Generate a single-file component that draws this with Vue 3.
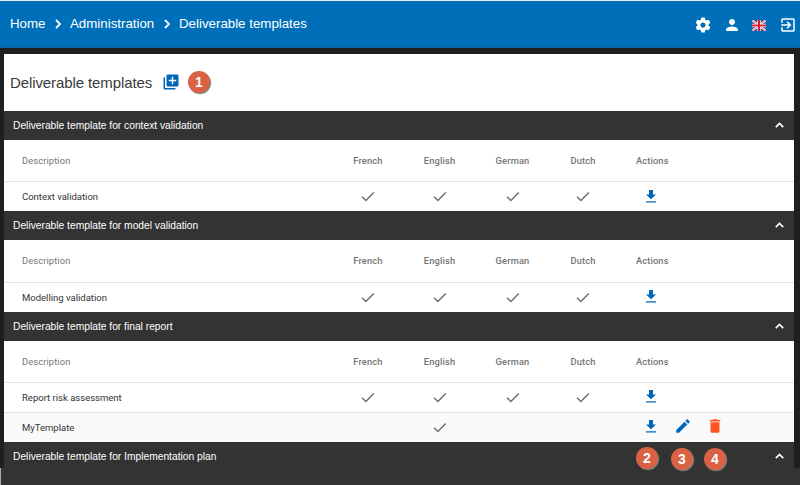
<script setup>
const crumbs = ['Home', 'Administration', 'Deliverable templates']
const languages = ['French', 'English', 'German', 'Dutch']
const sections = [
  { title: 'Deliverable template for context validation', rows: [{ name: 'Context validation', langs: languages }] },
  { title: 'Deliverable template for model validation', rows: [{ name: 'Modelling validation', langs: languages }] },
  {
    title: 'Deliverable template for final report',
    rows: [
      { name: 'Report risk assessment', langs: languages },
      { name: 'MyTemplate', langs: ['English'], editable: true },
    ],
  },
]
const callouts = [2, 3, 4]
</script>

<template>
  <div class="page">
    <header class="topbar">
      <nav class="crumbs">
        <template v-for="(c, i) in crumbs" :key="c">
          <svg v-if="i" class="sep" viewBox="0 0 6 10"><path d="M1 1l4 4-4 4" /></svg>
          <span :class="'crumb crumb-' + i">{{ c }}</span>
        </template>
      </nav>
      <div class="tools">
        <svg class="gear" viewBox="0 0 24 24"><path d="M19.43 12.98c.04-.32.07-.64.07-.98s-.03-.66-.07-.98l2.11-1.65c.19-.15.24-.42.12-.64l-2-3.46c-.12-.22-.39-.3-.61-.22l-2.49 1c-.52-.4-1.08-.73-1.69-.98l-.38-2.65C14.46 2.18 14.25 2 14 2h-4c-.25 0-.46.18-.49.42l-.38 2.65c-.61.25-1.17.59-1.69.98l-2.49-1c-.23-.09-.49 0-.61.22l-2 3.46c-.13.22-.07.49.12.64l2.11 1.65c-.04.32-.07.65-.07.98s.03.66.07.98l-2.11 1.65c-.19.15-.24.42-.12.64l2 3.46c.12.22.39.3.61.22l2.49-1c.52.4 1.08.73 1.69.98l.38 2.65c.03.24.24.42.49.42h4c.25 0 .46-.18.49-.42l.38-2.65c.61-.25 1.17-.59 1.69-.98l2.49 1c.23.09.49 0 .61-.22l2-3.46c.12-.22.07-.49-.12-.64l-2.11-1.65zM12 15.5c-1.93 0-3.5-1.57-3.5-3.5s1.57-3.5 3.5-3.5 3.5 1.57 3.5 3.5-1.57 3.5-3.5 3.5z" /></svg>
        <svg class="person" viewBox="0 0 24 24"><path d="M12 12c2.21 0 4-1.79 4-4s-1.79-4-4-4-4 1.79-4 4 1.79 4 4 4zm0 2c-2.67 0-8 1.34-8 4v2h16v-2c0-2.66-5.33-4-8-4z" /></svg>
        <svg class="flag" viewBox="0 0 14 11">
          <path fill="#2b3f86" d="M0 0h14v11H0z" />
          <path stroke="#fff" stroke-width="2.2" d="M0 0l14 11M14 0L0 11" />
          <path stroke="#d93a50" stroke-width=".8" d="M0 0l14 11M14 0L0 11" />
          <path stroke="#fff" stroke-width="3.4" d="M7 0v11M0 5.5h14" />
          <path stroke="#d8203c" stroke-width="2" d="M7 0v11M0 5.5h14" />
        </svg>
        <svg class="exit" viewBox="0 0 24 24"><path d="M10.09 15.59L11.5 17l5-5-5-5-1.41 1.41L12.67 11H3v2h9.67l-2.58 2.59zM19 3H5c-1.11 0-2 .9-2 2v4h2V5h14v14H5v-4H3v4c0 1.1.89 2 2 2h14c1.1 0 2-.9 2-2V5c0-1.1-.9-2-2-2z" /></svg>
      </div>
    </header>

    <main class="panel">
      <div class="title">
        <h1>Deliverable templates</h1>
        <svg class="add" viewBox="0 0 24 24"><path d="M4 6H2v14c0 1.1.9 2 2 2h14v-2H4V6zm16-4H8c-1.1 0-2 .9-2 2v12c0 1.1.9 2 2 2h12c1.1 0 2-.9 2-2V4c0-1.1-.9-2-2-2zm-1 9h-4v4h-2v-4H9V9h4V5h2v4h4v2z" /></svg>
        <span class="badge">1</span>
      </div>

      <section v-for="s in sections" :key="s.title">
        <div class="bar">
          <span>{{ s.title }}</span>
          <svg class="up" viewBox="0 0 9 6"><path d="M.8 5.1L4.5 1.4l3.7 3.7" /></svg>
        </div>
        <div class="row head">
          <span class="desc">Description</span>
          <span v-for="l in languages" :key="l" class="lang">{{ l }}</span>
          <span class="act-label">Actions</span>
        </div>
        <div v-for="r in s.rows" :key="r.name" class="row" :class="{ alt: r.editable }">
          <span class="desc">{{ r.name }}</span>
          <span v-for="l in languages" :key="l" class="cell">
            <svg v-if="r.langs.includes(l)" class="check" viewBox="0 0 14 11"><path d="M1 5.8L4.9 9.5 12.8 1.5" /></svg>
          </span>
          <span class="actions">
            <svg viewBox="0 0 18 18"><path d="M14 7.4h-3V3H7v4.4H4l5 4.8zM4 14.2v1.2h10v-1.2z" /></svg>
            <template v-if="r.editable">
              <svg viewBox="0 0 24 24"><path d="M3 17.25V21h3.75L17.81 9.94l-3.75-3.75L3 17.25zM20.71 7.04c.39-.39.39-1.02 0-1.41l-2.34-2.34c-.39-.39-1.02-.39-1.41 0l-1.83 1.83 3.75 3.75 1.83-1.83z" /></svg>
              <svg class="trash" viewBox="0 0 24 24"><path d="M6 19c0 1.1.9 2 2 2h8c1.1 0 2-.9 2-2V7H6v12zM19 4h-3.5l-1-1h-5l-1 1H5v2h14V4z" /></svg>
            </template>
          </span>
        </div>
      </section>
      <div class="bar last">
        <span>Deliverable template for Implementation plan</span>
        <svg class="up" viewBox="0 0 9 6"><path d="M.8 5.1L4.5 1.4l3.7 3.7" /></svg>
      </div>
    </main>
    <footer class="foot"></footer>
    <div class="callouts">
      <span v-for="n in callouts" :key="n" class="badge" :class="'b' + n">{{ n }}</span>
    </div>
  </div>
</template>

<style>
body { margin: 0; overflow: hidden; }
</style>
<style scoped>
.page {
  position: relative;
  width: 800px;
  height: 485px;
  overflow: hidden;
  background: #1f1f1f;
  font-family: "Liberation Sans", Arial, sans-serif;
  box-sizing: border-box;
}
svg { display: block; flex: none; fill: none; }
.topbar {
  display: flex;
  justify-content: space-between;
  height: 46px;
  border-top: 1px solid #e8eff3;
  border-bottom: 1px solid #0f629f;
  background: #006fba;
  color: #fff;
}
.crumbs { display: flex; align-items: center; padding-left: 10px; font-size: 13.3px; line-height: 46px; }
.crumb { white-space: nowrap; }
.crumb-0 { width: 45px; }
.crumb-1 { width: 94px; }
.sep { width: 6px; height: 10px; margin-right: 9px; stroke: #fff; stroke-width: 1.8; }
.tools { display: flex; align-items: center; padding: 2px 3px 0 0; }
.tools svg { fill: #fff; }
.gear { width: 18px; height: 18px; margin-right: 11px; }
.person { width: 18px; height: 18px; margin-right: 11px; }
.flag { width: 14px; height: 11px; margin-right: 13px; }
.exit { width: 18px; height: 18px; }
.panel { width: 790px; margin: 6px 0 0 4px; background: #fff; }
.title { display: flex; align-items: center; height: 57px; padding: 0 0 1px 6px; box-sizing: border-box; }
h1 { margin: 0; width: 152px; font-size: 15px; letter-spacing: -.1px; font-weight: 400; color: #3a3a3a; white-space: nowrap; }
.add { width: 18px; height: 18px; fill: #0067b8; }
.title .badge { margin-left: 8px; }
.badge {
  display: block;
  width: 22px;
  height: 22px;
  border-radius: 50%;
  background: #d96144;
  box-shadow: 1px 1px 1px 0 #777;
  color: #fff;
  font-size: 14px;
  font-weight: 700;
  line-height: 22px;
  text-align: center;
}
.bar {
  display: flex;
  align-items: center;
  justify-content: space-between;
  height: 29px;
  padding: 0 10px 0 9px;
  background: #333;
  color: #fff;
  font-size: 10.26px;
}
.up { width: 9px; height: 6px; margin-bottom: 1px; stroke: #fff; stroke-width: 1.7; }
.row {
  display: grid;
  grid-template-columns: 328px 72px 71px 75px 66px 1fr;
  align-items: center;
  height: 29.9px;
  border-top: 1px solid #e2e2e2;
  font-family: Roboto, "Liberation Sans", sans-serif;
  font-size: 9.5px;
  color: #333;
  box-sizing: border-box;
}
.row.alt { background: #fafafa; }
.row.head { height: 41.4px; border-top: 0; color: #757575; font-size: 9.3px; }
.desc { padding-left: 18px; white-space: nowrap; }
.lang { text-align: center; font-weight: 500; letter-spacing: .15px; }
.head .desc, .act-label { letter-spacing: .12px; }
.act-label { padding-left: 20px; font-weight: 500; }
.check { width: 14px; height: 11px; margin: 0 auto; stroke: #6f6f6f; stroke-width: 1.5; }
.actions { display: flex; gap: 14px; padding: 0 0 2px 26px; }
.actions svg { width: 18px; height: 18px; fill: #0067b8; }
.actions .trash { fill: #ff5722; }
.foot { height: 40px; margin: -3px 0 0; border-left: 1px solid #aaa; background: #333; }
.callouts .badge { position: absolute; box-shadow: 1px 1px 1px 0 #888; }
.b2 { left: 636px; top: 447px; }
.b3 { left: 671px; top: 448px; }
.b4 { left: 704px; top: 448px; }
</style>
